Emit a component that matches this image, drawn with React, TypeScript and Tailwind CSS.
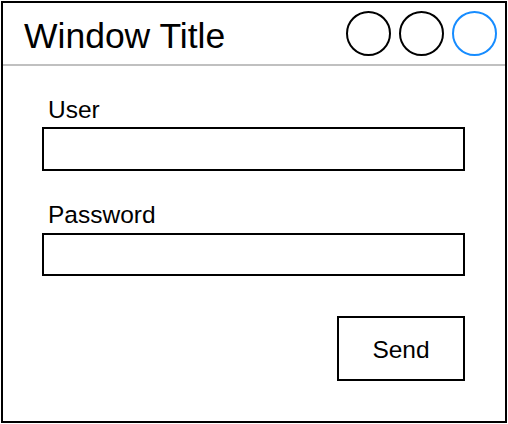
export default function App() {
  return (
    <div className="w-[508px] h-[424px] bg-white font-['Liberation_Sans',Arial,sans-serif] text-black">
      <div className="ml-px mt-px w-[506px] h-[422px] border-2 border-black flex flex-col">
        {/* Title bar */}
        <div className="h-[63px] flex items-center justify-between pl-[21px] pr-[8px] border-b-2 border-[#c0c0c0]">
          <span className="text-[35.5px] leading-none mt-[6px]">Window Title</span>
          <div className="flex items-center gap-[8px]">
            <div className="w-[45px] h-[45px] rounded-full border-2 border-black" />
            <div className="w-[45px] h-[45px] rounded-full border-2 border-black" />
            <div className="w-[45px] h-[45px] rounded-full border-2 border-[#168cff]" />
          </div>
        </div>

        {/* Form */}
        <div className="flex flex-col pl-[39px] pr-[40px]">
          <label className="mt-[30px] pl-[6px] text-[24.5px] leading-[28px]">User</label>
          <div className="mt-[3px] h-[44px] border-2 border-black" />
          <label className="mt-[30px] pl-[6px] text-[24.5px] leading-[28px]">Password</label>
          <div className="mt-[4px] h-[43px] border-2 border-black" />
          <div className="flex justify-end mt-[40px]">
            <button className="w-[128px] h-[65px] border-2 border-black text-[24.5px] pt-[4px]">
              Send
            </button>
          </div>
        </div>
      </div>
    </div>
  );
}
